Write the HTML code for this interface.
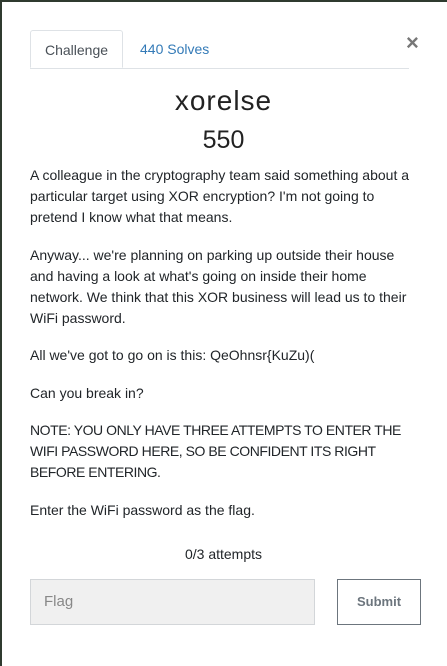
<!DOCTYPE html>
<html><head><style>
body{margin:0;width:447px;height:666px;background:#2f3a2f;overflow:hidden;font-family:"Liberation Sans",sans-serif;}
.m{position:absolute;left:2px;top:2px;width:445px;height:664px;background:#fff;}
.tabs{position:absolute;left:28px;top:28px;width:379px;height:38px;border-bottom:1px solid #dee2e6;}
.t1{position:absolute;left:0;top:0;width:93px;height:38px;border:1px solid #dee2e6;border-bottom:1px solid #fff;border-radius:3px 3px 0 0;box-sizing:border-box;text-align:center;line-height:38px;font-size:14px;color:#495057;}
.t2{position:absolute;left:110px;top:0;line-height:38px;font-size:14px;color:#337ab7;}
.x{position:absolute;left:404px;top:28px;font-size:22px;color:#777;font-weight:bold;}
h1{position:absolute;margin:0;left:0;width:443px;text-align:center;top:83px;font-size:28px;font-weight:normal;color:#222;letter-spacing:1px;}
h2{position:absolute;margin:0;left:0;width:443px;text-align:center;top:124px;font-size:25px;font-weight:normal;color:#222;}
.d{position:absolute;left:28px;top:163px;width:389px;font-size:14px;line-height:21px;color:#212529;}
.d p{margin:0 0 16.5px;}
.d p.n{letter-spacing:-0.45px;width:400px;}
.a{position:absolute;left:0;width:443px;text-align:center;top:544px;font-size:14px;color:#212529;}
.in{position:absolute;left:28px;top:577px;width:285px;height:46px;background:#f0f0f0;border:1px solid #d3d6d9;box-sizing:border-box;font-size:15px;color:#888;padding-left:13px;line-height:44px;}
.b{position:absolute;left:335px;top:577px;width:84px;height:46px;border:1px solid #6c757d;box-sizing:border-box;text-align:center;line-height:44px;font-size:13px;font-weight:bold;color:#6c757d;}
</style></head><body><div class="m">
<div class="tabs"><div class="t1">Challenge</div><div class="t2">440 Solves</div></div>
<div class="x">×</div>
<h1>xorelse</h1><h2>550</h2>
<div class="d">
<p>A colleague in the cryptography team said something about a particular target using XOR encryption? I'm not going to pretend I know what that means.</p>
<p>Anyway... we're planning on parking up outside their house<br>and having a look at what's going on inside their home<br>network. We think that this XOR business will lead us to their<br>WiFi password.</p>
<p>All we've got to go on is this: QeOhnsr{KuZu)(</p>
<p>Can you break in?</p>
<p class="n">NOTE: YOU ONLY HAVE THREE ATTEMPTS TO ENTER THE WIFI PASSWORD HERE, SO BE CONFIDENT ITS RIGHT BEFORE ENTERING.</p>
<p>Enter the WiFi password as the flag.</p>
</div>
<div class="a">0/3 attempts</div>
<div class="in">Flag</div>
<div class="b">Submit</div>
</div></body></html>
